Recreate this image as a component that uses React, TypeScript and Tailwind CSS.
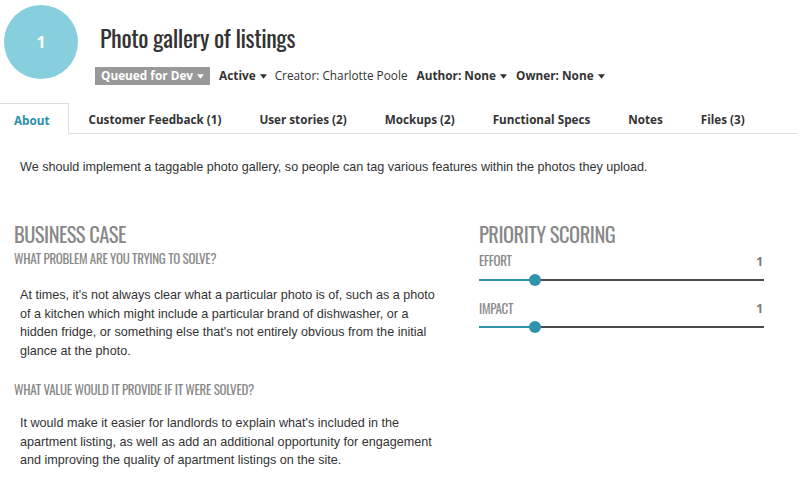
const condensed = "font-['Oswald','Liberation_Sans_Narrow','DejaVu_Sans_Condensed',sans-serif]";

const Caret = ({ className = "" }: { className?: string }) => (
  <svg viewBox="0 0 8 5" className={`w-[7px] h-[5px] ml-[4px] ${className}`}>
    <path d="M0 0h8L4 5z" fill="currentColor" />
  </svg>
);

const tabs = [
  "About",
  "Customer Feedback (1)",
  "User stories (2)",
  "Mockups (2)",
  "Functional Specs",
  "Notes",
  "Files (3)",
];

const Slider = ({ label, value, top }: { label: string; value: number; top: string }) => (
  <div className={top}>
    <div className="flex items-end justify-between">
      <span className={`${condensed} text-[13px] text-[#888] tracking-[-0.3px]`}>{label}</span>
      <span className="font-['Open_Sans',sans-serif] font-bold text-[12px] text-[#777] mr-[1px]">{value}</span>
    </div>
    <div className="relative h-[14px] mt-[2px] flex items-center">
      <div className="h-[2px] w-[56px] bg-[#2f93ad]" />
      <div className="h-[2px] flex-1 bg-[#4a4a4a]" />
      <div className="absolute left-[50px] top-[1px] w-[12px] h-[12px] rounded-full bg-[#2f93ad]" />
    </div>
  </div>
);

const App = () => {
  return (
    <div className="w-[797px] h-[502px] bg-white overflow-hidden font-['Liberation_Sans',Arial,sans-serif] text-[#333]">
      {/* Header */}
      <div className="flex pl-[4px] pt-[5px]">
        <div className="w-[74px] h-[74px] rounded-full bg-[#88cfdd] flex items-center justify-center shrink-0">
          <span className="font-['Open_Sans',sans-serif] font-bold text-white text-[16px]">1</span>
        </div>
        <div className="ml-[17px] pt-[16px]">
          <h1 className={`${condensed} text-[24px] leading-[32px] text-[#333] ml-[5px] tracking-[-0.4px]`}>
            Photo gallery of listings
          </h1>
          <div className="flex items-center mt-[14px] font-['Open_Sans',sans-serif] text-[11.8px]">
            <span className="flex items-center bg-[#999] text-white font-bold h-[18px] px-[6px]">
              Queued for Dev
              <Caret className="text-white" />
            </span>
            <span className="flex items-center font-bold ml-[9px] text-[#333]">
              Active
              <Caret />
            </span>
            <span className="ml-[8px] text-[#333]">Creator: Charlotte Poole</span>
            <span className="flex items-center font-bold ml-[9px]">
              Author: None
              <Caret />
            </span>
            <span className="flex items-center font-bold ml-[9px]">
              Owner: None
              <Caret />
            </span>
          </div>
        </div>
      </div>

      {/* Tabs */}
      <div className="mt-[18px] flex border-b border-[#ddd] h-[31px] ml-[-6px]">
        {tabs.map((t, i) => (
          <div
            key={t}
            className={`px-[19px] pt-[4px] flex items-center font-['Open_Sans',sans-serif] font-bold text-[11.7px] ${
              i === 0
                ? "text-[#2a8fa8] border border-[#ddd] border-b-white bg-white h-[31px] -mb-px"
                : "text-[#333]"
            }`}
          >
            {t}
          </div>
        ))}
      </div>

      {/* Description */}
      <p className="text-[12.6px] px-[20px] mt-[24px] leading-[18px]">
        We should implement a taggable photo gallery, so people can tag various features within the photos they upload.
      </p>

      {/* Columns */}
      <div className="flex mt-[46px] pl-[14px]">
        <div className="w-[440px]">
          <h2 className={`${condensed} text-[20.5px] leading-[24px] text-[#888] tracking-[-0.5px]`}>BUSINESS CASE</h2>
          <h3 className={`${condensed} text-[13px] leading-[18px] text-[#888] mt-[3px] tracking-[-0.3px]`}>
            WHAT PROBLEM ARE YOU TRYING TO SOLVE?
          </h3>
          <p className="text-[12.6px] leading-[18.5px] pl-[6px] mt-[19px] pr-[10px]">
            At times, it's not always clear what a particular photo is of, such as a photo of a kitchen which might include a particular brand of dishwasher, or a hidden fridge, or something else that's not entirely obvious from the initial glance at the photo.
          </p>
          <h3 className={`${condensed} text-[13px] leading-[18px] text-[#888] mt-[20px] tracking-[-0.3px]`}>
            WHAT VALUE WOULD IT PROVIDE IF IT WERE SOLVED?
          </h3>
          <p className="text-[12.6px] leading-[18.5px] pl-[6px] mt-[16px] pr-[10px]">
            It would make it easier for landlords to explain what's included in the apartment listing, as well as add an additional opportunity for engagement and improving the quality of apartment listings on the site.
          </p>
        </div>
        <div className="ml-[25px] w-[285px]">
          <h2 className={`${condensed} text-[20.5px] leading-[24px] text-[#888] tracking-[-0.5px]`}>PRIORITY SCORING</h2>
          <Slider label="EFFORT" value={1} top="mt-[5px]" />
          <Slider label="IMPACT" value={1} top="mt-[12px]" />
        </div>
      </div>
    </div>
  );
};

export default App;
